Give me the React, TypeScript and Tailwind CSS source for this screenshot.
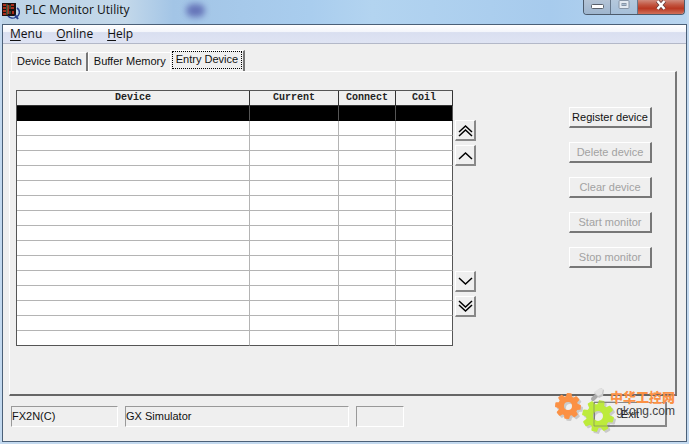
import React, { useState } from "react";

const tabs = ["Device Batch", "Buffer Memory", "Entry Device"];
const menus = ["Menu", "Online", "Help"];
const columns = ["Device", "Current", "Connect", "Coil"];
const rows = Array.from({ length: 16 }, (_, i) => i);

const actions = [
  { label: "Register device", disabled: false },
  { label: "Delete device", disabled: true },
  { label: "Clear device", disabled: true },
  { label: "Start monitor", disabled: true },
  { label: "Stop monitor", disabled: true },
];

// Outline of a toothed wheel with a round hole
const gearPath = (cx: number, cy: number, outer: number, inner: number, hole: number, turn: number) => {
  const teeth = 8;
  const step = (Math.PI * 2) / teeth;
  const points: string[] = [];
  for (let i = 0; i < teeth; i++) {
    const a = i * step + turn;
    [
      [inner, -0.3],
      [outer, -0.17],
      [outer, 0.17],
      [inner, 0.3],
    ].forEach(([r, k]) => {
      points.push(`${(cx + r * Math.cos(a + k * step)).toFixed(2)} ${(cy + r * Math.sin(a + k * step)).toFixed(2)}`);
    });
  }
  return `M${points.join("L")}Z M${cx + hole} ${cy}a${hole} ${hole} 0 1 0 ${-2 * hole} 0a${hole} ${hole} 0 1 0 ${2 * hole} 0Z`;
};

const AppIcon: React.FC = () => (
  <svg width="18" height="18" viewBox="0 0 18 18" aria-hidden="true">
    <rect x="0" y="1" width="14" height="13" fill="#1c1010" />
    <path d="M1 3h3M1 6h3M1 9h3M1 12h3M6 3v9M9 3h3M9 6h3M11 9v3" stroke="#d8371f" strokeWidth="1.500" fill="none" />
    <path d="M5 2v11M8 3v4M8 9v3" stroke="#4d7a55" strokeWidth="1" />
    <path d="M15 6a5 5 0 0 1-1 9a6 6 0 0 1-8-1" fill="none" stroke="#27418f" strokeWidth="1.500" />
    <path d="M13 13l3 4" stroke="#27418f" strokeWidth="2" />
  </svg>
);

const TitleBar: React.FC = () => (
  <header className="relative flex h-[24px] items-start justify-between overflow-hidden bg-[linear-gradient(90deg,#bdd3e6_0%,#c3d8ea_18%,#a3c5e6_25%,#a9cdee_45%,#b3d4f0_54%,#a7cbed_80%,#b9d5ef_100%)]">
    <div className="absolute top-[4px] left-[184px] h-[13px] w-[19px] rounded-full bg-[#5660ad] opacity-80 blur-[3px]"></div>
    <div className="relative flex items-center gap-[5px]">
      <div className="pt-[1px]">
        <AppIcon />
      </div>
      <h1 className="text-[12px] leading-[20px] text-[#111]">PLC Monitor Utility</h1>
    </div>
    <div className="relative mr-[2px] flex h-[15px] overflow-hidden rounded-b-[4px] border border-t-0 border-[#4c5a6b]">
      <button aria-label="Minimize" className="flex w-[27px] items-center justify-center border-r border-[#66788c] bg-gradient-to-b from-[#b4c4d6] to-[#9eb5ce]">
        <svg width="13" height="6" viewBox="0 0 13 6">
          <rect x="0.500" y="0.500" width="12" height="4" rx="1" fill="#fff" stroke="#59606b" />
        </svg>
      </button>
      <button aria-label="Maximize" className="flex w-[27px] items-start justify-center border-r border-[#66788c] bg-gradient-to-b from-[#b4c8dc] to-[#a5bfd9]">
        <svg width="12" height="10" viewBox="0 0 12 10">
          <rect x="1" y="0.500" width="10" height="8" rx="1" fill="#e3eaf2" stroke="#8795a6" />
          <rect x="4" y="3.500" width="4" height="2" fill="#a9bdd2" stroke="#8795a6" />
        </svg>
      </button>
      <button aria-label="Close" className="flex w-[46px] items-start justify-center bg-[linear-gradient(180deg,#d08a7c_0%,#c2543f_35%,#b93822_60%,#d0705a_100%)]">
        <svg width="12" height="11" viewBox="0 0 12 11">
          <path d="M2.500 1l7 8M9.500 1l-7 8" stroke="#673c3c" strokeWidth="4" />
          <path d="M2.500 1l7 8M9.500 1l-7 8" stroke="#fff" strokeWidth="2.500" />
        </svg>
      </button>
    </div>
  </header>
);

const ArrowButton: React.FC<{ label: string; down?: boolean; double?: boolean }> = ({ label, down, double }) => (
  <button
    aria-label={label}
    className="flex h-[21px] w-[21px] items-center justify-center border-t border-r-2 border-b-2 border-l border-t-white border-r-[#888] border-b-[#888] border-l-white bg-[#efefef]">
    <svg width="15" height="15" viewBox="0 0 15 15" fill="none" stroke="#000" strokeWidth="1.500" className={down ? "rotate-180" : ""}>
      {double ? <path d="M1 9l6.500-6l6.500 6M1 13l6.500-6l6.500 6" /> : <path d="M1 11l6.500-6l6.500 6" />}
    </svg>
  </button>
);

const DeviceTable: React.FC = () => (
  <table className="w-[437px] table-fixed border-separate border-spacing-0 border-t border-l border-[#555] bg-white">
    <colgroup>
      <col className="w-[233px]" />
      <col className="w-[89px]" />
      <col className="w-[57px]" />
      <col className="w-[57px]" />
    </colgroup>
    <thead>
      <tr>
        {columns.map((name) => (
          <th
            key={name}
            className="h-[15px] border-r border-b border-[#333] bg-[#efefef] p-0 text-center font-['Liberation_Mono',monospace] text-[10px] leading-[14px] font-bold text-[#222]">
            {name}
          </th>
        ))}
      </tr>
    </thead>
    <tbody>
      {rows.map((row) => (
        <tr key={row} className={row === 0 ? "bg-black" : "bg-white"}>
          {columns.map((name) => (
            <td
              key={name}
              className={`h-[15px] border-r border-b p-0 last:border-r-[#555] ${row === 0 ? "border-r-[#555] border-b-black" : "border-r-[#b4b4b4]"} ${row === 15 ? "border-b-[#555]" : row > 0 ? "border-b-[#b4b4b4]" : ""}`}></td>
          ))}
        </tr>
      ))}
    </tbody>
  </table>
);

const StatusField: React.FC<{ text?: string; width: string }> = ({ text, width }) => (
  <div className={`h-[21px] border border-t-[#999] border-r-white border-b-white border-l-[#999] leading-[19px] ${width}`}>{text}</div>
);

const Watermark: React.FC = () => (
  <div className="pointer-events-none absolute right-0 bottom-[-9px] h-[52px] w-[124px]">
    <svg width="124" height="52" viewBox="0 0 124 52" className="absolute inset-0">
      <g opacity="0.3" fill="#777" stroke="#777" strokeWidth="2" strokeLinejoin="round">
        <path fillRule="evenodd" d={gearPath(17, 24, 12, 9, 5, 0.1)} />
        <path fillRule="evenodd" d={gearPath(47, 34, 15, 11, 6, 0.25)} />
      </g>
      <path d="M40 15l6-6" stroke="#aaa" strokeWidth="4" strokeLinecap="round" />
      <path d="M41 9l7-5l3 2l-1 6l-4 2z" fill="#c4c4c4" />
      <path d="M41 8l6-4l3 1l-1 5l-4 2z" fill="#e2e2e2" />
      <g strokeWidth="2" strokeLinejoin="round">
        <path fillRule="evenodd" d={gearPath(15, 22, 12, 9, 5, 0.1)} fill="#fb9145" stroke="#fb9145" />
        <path fillRule="evenodd" d={gearPath(45, 32, 15, 11, 6, 0.25)} fill="#bdeb3c" stroke="#bdeb3c" />
      </g>
      <path d="M62 18H41V42H62" fill="none" stroke="#777" strokeWidth="1" opacity="0.6" />
    </svg>
    <div className="absolute top-[5px] right-[2px] text-right">
      <div className="font-['Noto_Sans_CJK_SC',sans-serif] text-[13px] leading-[16px] font-black text-[#fb9145]">中华工控网</div>
      <div className="text-[12px] leading-[13px] text-[#444]">gkong.com</div>
    </div>
  </div>
);

const App: React.FC = () => {
  const [active, setActive] = useState("Entry Device");

  return (
    <div className="flex min-h-screen flex-col bg-[#c3d9ef] px-[2px] pb-[2px] font-['Liberation_Sans',Arial,sans-serif] text-[11px] text-[#111]">
      <div className="font-['Open_Sans',sans-serif]">
        <TitleBar />
      </div>
      <div className="flex flex-1 flex-col border border-[#4b6078] bg-[#efefef]">
        <nav className="flex h-[19px] items-center gap-[14px] border-b border-[#b3b8c8] bg-[linear-gradient(180deg,#fff_0%,#f3f5fb_38%,#d9dff0_42%,#dfe4f3_100%)] pl-[7px] font-['Open_Sans',sans-serif] text-[12px] leading-[18px]">
          {menus.map((name) => (
            <button key={name}>
              <span className="underline underline-offset-2">{name[0]}</span>
              {name.slice(1)}
            </button>
          ))}
        </nav>
        <main className="flex flex-1 flex-col pt-[6px] pr-[9px] pl-[6px]">
          <div role="tablist" className="flex h-[21px] items-end pl-[2px]">
            {tabs.map((name) => (
              <button
                key={name}
                role="tab"
                aria-selected={active === name}
                onClick={() => setActive(name)}
                className={
                  active === name
                    ? "h-[21px] border-t border-r-2 border-l border-t-white border-r-[#777] border-l-white px-[1px] pb-[2px]"
                    : "h-[19px] border-t border-r-2 border-l border-t-white border-r-[#777] border-l-white pr-[4px] pl-[5px] last:border-r-0 nth-2:border-r-0"
                }>
                <span className={active === name ? "block border border-dotted border-black px-[3px] pb-[2px] leading-[14px]" : "block pb-[2px] leading-[16px]"}>{name}</span>
              </button>
            ))}
          </div>
          <section className="flex items-start border-t border-r-2 border-b-2 border-l border-t-white border-r-[#777] border-b-[#666] border-l-white pt-[18px] pr-[23px] pb-[48px] pl-[6px]">
            <DeviceTable />
            <div className="ml-[2px] flex flex-col self-stretch pt-[30px] pb-[29px]">
              <div className="flex flex-col gap-[4px]">
                <ArrowButton label="First" double />
                <ArrowButton label="Up" />
              </div>
              <div className="mt-auto flex flex-col gap-[4px]">
                <ArrowButton label="Down" down />
                <ArrowButton label="Last" down double />
              </div>
            </div>
            <div className="ml-auto flex w-[83px] flex-col gap-[14px] pt-[17px]">
              {actions.map(({ label, disabled }) => (
                <button
                  key={label}
                  disabled={disabled}
                  className="h-[21px] border-t border-r-2 border-b-2 border-l border-t-white border-r-[#777] border-b-[#777] border-l-white leading-[18px] whitespace-nowrap disabled:text-[#a2a2a2]">
                  {label}
                </button>
              ))}
            </div>
          </section>
          <footer className="relative flex items-end gap-[7px] pt-[6px] pb-[14px] pl-[2px]">
            <StatusField text="FX2N(C)" width="w-[107px]" />
            <StatusField text="GX Simulator" width="w-[224px]" />
            <StatusField width="w-[48px]" />
            <div className="relative ml-auto pr-[10px]">
              <button className="h-[25px] w-[73px] border border-r-2 border-b-2 border-[#888]">Exit</button>
              <Watermark />
            </div>
          </footer>
        </main>
      </div>
    </div>
  );
};

export default App;
